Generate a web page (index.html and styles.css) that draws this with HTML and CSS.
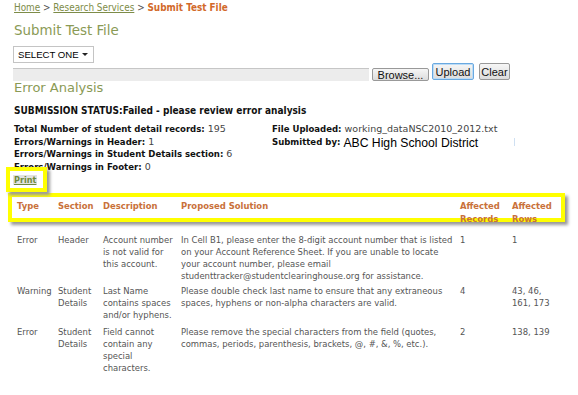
FILE: index.html
```html
<!DOCTYPE html>
<html>
<head>
<meta charset="utf-8">
<link rel="stylesheet" href="styles.css">
</head>
<body>
<div class="page">
  <div class="crumbs"><a href="#">Home</a> &gt; <a href="#">Research Services</a> &gt; <b>Submit Test File</b></div>
  <h1 class="title">Submit Test File</h1>
  <div class="select"><span>SELECT ONE</span><span class="caret"></span></div>
  <div class="filerow">
    <div class="filebar"></div>
    <span class="btn browse">Browse...</span>
    <span class="btn upload">Upload</span>
    <span class="btn clear">Clear</span>
  </div>
  <h2 class="title">Error Analysis</h2>
  <div class="status">SUBMISSION STATUS:Failed - please review error analysis</div>
  <div class="stats">
    <div class="col">
      <div><b>Total Number of student detail records:</b> 195</div>
      <div><b>Errors/Warnings in Header:</b> 1</div>
      <div><b>Errors/Warnings in Student Details section:</b> 6</div>
      <div><b>Errors/Warnings in Footer:</b> 0</div>
    </div>
    <div class="col right">
      <div><b>File Uploaded:</b> working_dataNSC2010_2012.txt</div>
      <div><b>Submitted by:</b> <span class="district">ABC High School District</span><span class="cursor"></span></div>
    </div>
  </div>
  <div class="printbox"><a href="#" class="print">Print</a></div>
  <div class="grid head">
    <div>Type</div><div>Section</div><div>Description</div><div>Proposed Solution</div><div>Affected Records</div><div>Affected Rows</div>
  </div>
  <div class="grid row">
    <div>Error</div><div>Header</div><div>Account number is not valid for this account.</div>
    <div>In Cell B1, please enter the 8-digit account number that is listed on your Account Reference Sheet. If you are unable to locate your account number, please email studenttracker@studentclearinghouse.org for assistance.</div>
    <div>1</div><div>1</div>
  </div>
  <div class="grid row">
    <div>Warning</div><div>Student Details</div><div>Last Name contains spaces and/or hyphens.</div>
    <div>Please double check last name to ensure that any extraneous spaces, hyphens or non-alpha characters are valid.</div>
    <div>4</div><div>43, 46,<br>161, 173</div>
  </div>
  <div class="grid row last">
    <div>Error</div><div>Student Details</div><div>Field cannot contain any special characters.</div>
    <div>Please remove the special characters from the field (quotes, commas, periods, parenthesis, brackets, @, #, &amp;, %, etc.).</div>
    <div>2</div><div>138, 139</div>
  </div>
</div>
</body>
</html>
```

FILE: styles.css
```css
html, body { margin: 0; padding: 0; background: #fff; }
body { font-family: "DejaVu Sans Condensed", "DejaVu Sans", sans-serif; color: #444; }
.page { padding: 2px 0 0 0; }
.crumbs { margin-left: 14px; font-size: 9.9px; line-height: 12px; color: #555; white-space: nowrap; }
.crumbs a { color: #7d8c48; text-decoration: underline; }
.crumbs b { color: #d2692a; }
.title { font-family: "DejaVu Sans", sans-serif; font-weight: normal; color: #8a9a55; margin: 0 0 0 14px; }
h1.title { font-size: 13.4px; line-height: 16px; margin-top: 9px; }
h2.title { font-size: 13px; line-height: 14px; margin-top: 0; }
.select { margin: 7px 0 0 13px; width: 75px; height: 15px; border: 1px solid #c4c4c4; display: flex; align-items: center; justify-content: space-between; padding: 0 0 0 4px; font-family: "Liberation Sans", Arial, sans-serif; font-size: 9.6px; color: #000; white-space: nowrap; }
.caret { width: 0; height: 0; border-left: 3px solid transparent; border-right: 3px solid transparent; border-top: 3px solid #222; margin-right: 5px; }
.filerow { display: flex; align-items: flex-end; margin: 0 0 0 13px; height: 18px; }
.filebar { width: 356px; height: 12px; background: #ececec; border-top: 1px solid #c6c6c6; }
.btn { font-family: "Liberation Sans", Arial, sans-serif; font-size: 11px; color: #111; background: linear-gradient(#f6f6f6, #dcdcdc); border: 1px solid #999; border-radius: 2px; display: flex; align-items: center; justify-content: center; box-sizing: border-box; }
.browse { width: 57px; height: 13px; margin-left: 3px; }
.upload { width: 42px; height: 17px; margin-left: 3px; margin-bottom: 1px; border: 1px solid #6aa9e0; box-shadow: inset 0 0 0 1px #bcdcf6; }
.clear { width: 31px; height: 17px; margin-left: 5px; margin-bottom: 1px; }
.status { margin: 10px 0 0 14px; font-size: 10px; font-weight: bold; color: #111; line-height: 12px; white-space: nowrap; }
.stats { display: flex; margin: 6px 0 0 14px; font-size: 9.5px; line-height: 12.5px; color: #444; white-space: nowrap; }
.stats b { color: #111; font-family: "DejaVu Sans Condensed", "DejaVu Sans", sans-serif; }
.stats div { font-family: "DejaVu Sans", sans-serif; }
.col { width: 258px; }
.col.right { width: auto; }
.district { font-family: "Liberation Sans", Arial, sans-serif; font-size: 12.2px; line-height: 12px; color: #000; vertical-align: -2px; }
.cursor { display: inline-block; width: 1px; height: 8px; background: #cfe0f2; margin-left: 36px; vertical-align: middle; }
.printbox { position: relative; margin: -6px 0 0 6px; width: 41px; height: 25px; border: 4px solid #ffff00; box-sizing: border-box; box-shadow: 3px 3px 3px #999; background: #fff; display: flex; align-items: center; padding-left: 3px; }
.print { font-size: 9px; font-weight: bold; color: #6f8a3c; background: #e2e2e2; padding: 0 1px; line-height: 10px; }
.grid { display: grid; grid-template-columns: 41px 45px 78px 279px 52px 1fr; font-size: 9.4px; line-height: 12px; }
.head { margin: 1px 0 0 8px; width: 557px; box-sizing: border-box; border: 4px solid #ffff00; box-shadow: 3px 3px 3px #999; padding: 2px 0 0 5px; color: #c9713a; font-weight: bold; height: 29px; line-height: 13px; }
.row { margin: 0 0 0 8px; width: 557px; box-sizing: border-box; padding: 12px 0 0 9px; color: #555; }
.row > div { padding-right: 4px; }
.row + .row { padding-top: 3px; }
.row + .row.last { padding-top: 5px; }
```
